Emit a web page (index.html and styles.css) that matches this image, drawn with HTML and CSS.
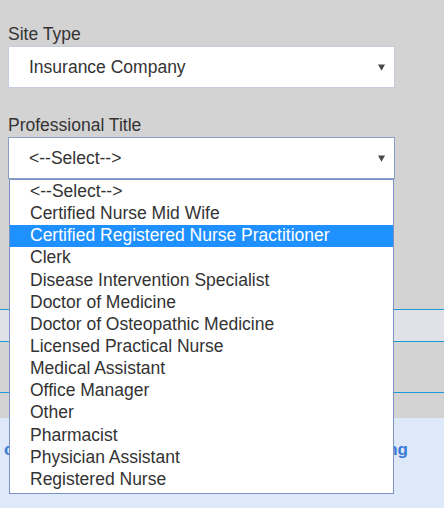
FILE: index.html
```html
<!DOCTYPE html>
<html lang="en">
<head>
<meta charset="utf-8">
<title>Professional Title</title>
<link rel="stylesheet" href="styles.css">
</head>
<body>
<div class="page">
  <div class="form">
    <div class="field-label">Site Type</div>
    <div class="select">
      <span class="select-value">Insurance Company</span>
      <svg class="arrow" width="7" height="7" viewBox="0 0 7 7"><polygon points="0,0.5 7,0.5 3.5,6.8" fill="#4a4a4a"/></svg>
    </div>
    <div class="field-label second">Professional Title</div>
    <div class="select-wrap">
      <div class="select focused">
        <span class="select-value">&lt;--Select--&gt;</span>
        <svg class="arrow" width="7" height="7" viewBox="0 0 7 7"><polygon points="0,0.5 7,0.5 3.5,6.8" fill="#4a4a4a"/></svg>
      </div>
      <ul class="dropdown">
        <li>&lt;--Select--&gt;</li>
        <li>Certified Nurse Mid Wife</li>
        <li class="active">Certified Registered Nurse Practitioner</li>
        <li>Clerk</li>
        <li>Disease Intervention Specialist</li>
        <li>Doctor of Medicine</li>
        <li>Doctor of Osteopathic Medicine</li>
        <li>Licensed Practical Nurse</li>
        <li>Medical Assistant</li>
        <li>Office Manager</li>
        <li>Other</li>
        <li>Pharmacist</li>
        <li>Physician Assistant</li>
        <li>Registered Nurse</li>
      </ul>
    </div>
  </div>
  <div class="tab-row"></div>
  <div class="gray-row"></div>
  <div class="gray-row short"></div>
  <div class="info">
    <p class="info-link">click here for help on choosing a setting</p>
  </div>
</div>
</body>
</html>
```

FILE: styles.css
```css
* {
  box-sizing: border-box;
}

html, body {
  margin: 0;
  padding: 0;
}

body {
  font-family: "Liberation Sans", Arial, sans-serif;
  font-size: 17.5px;
  color: #333;
  background: #dde9f8;
}

.page {
  width: 444px;
  height: 508px;
  overflow: hidden;
  display: flex;
  flex-direction: column;
}

.form {
  background: #d3d3d3;
  padding: 25px 0 130px 8px;
}

.field-label {
  line-height: 18px;
  height: 18px;
  margin-bottom: 3px;
  color: #333;
}

.field-label.second {
  margin-top: 28px;
  margin-bottom: 3px;
}

.select {
  width: 387px;
  height: 42px;
  background: #fff;
  border: 1px solid #c5cce0;
  display: flex;
  align-items: center;
  justify-content: space-between;
  padding: 0 9px 0 20px;
}

.select.focused {
  border-color: #8b9fc6;
}

.select-value {
  line-height: 18px;
  color: #333;
}

.arrow {
  display: block;
}

.select-wrap {
  position: relative;
}

.dropdown {
  position: absolute;
  top: 100%;
  left: 1px;
  width: 385px;
  height: 315px;
  margin: 0;
  padding: 1px 0 0 0;
  list-style: none;
  background: #fff;
  border: 1px solid #7b93c6;
  z-index: 5;
}

.dropdown li {
  height: 22.15px;
  line-height: 20px;
  padding-left: 20px;
  white-space: nowrap;
  color: #333;
}

.dropdown li.active {
  background: #1e90ff;
  color: #fff;
}

.tab-row {
  height: 33px;
  background: #e1e2e7;
  border-top: 1px solid #1a9ad6;
  border-bottom: 1px solid #1a9ad6;
}

.gray-row {
  height: 51px;
  background: #d3d3d3;
  border-bottom: 1px solid #1a9ad6;
}

.gray-row.short {
  height: 25px;
  border-bottom: none;
}

.info {
  flex: 1;
  background: #dde9f8;
  padding: 22px 0 0 4px;
}

.info-link {
  margin: 0;
  width: 404px;
  font-weight: bold;
  font-size: 17px;
  line-height: 20px;
  color: #3b7bd8;
  text-align: justify;
  text-align-last: justify;
}
```
